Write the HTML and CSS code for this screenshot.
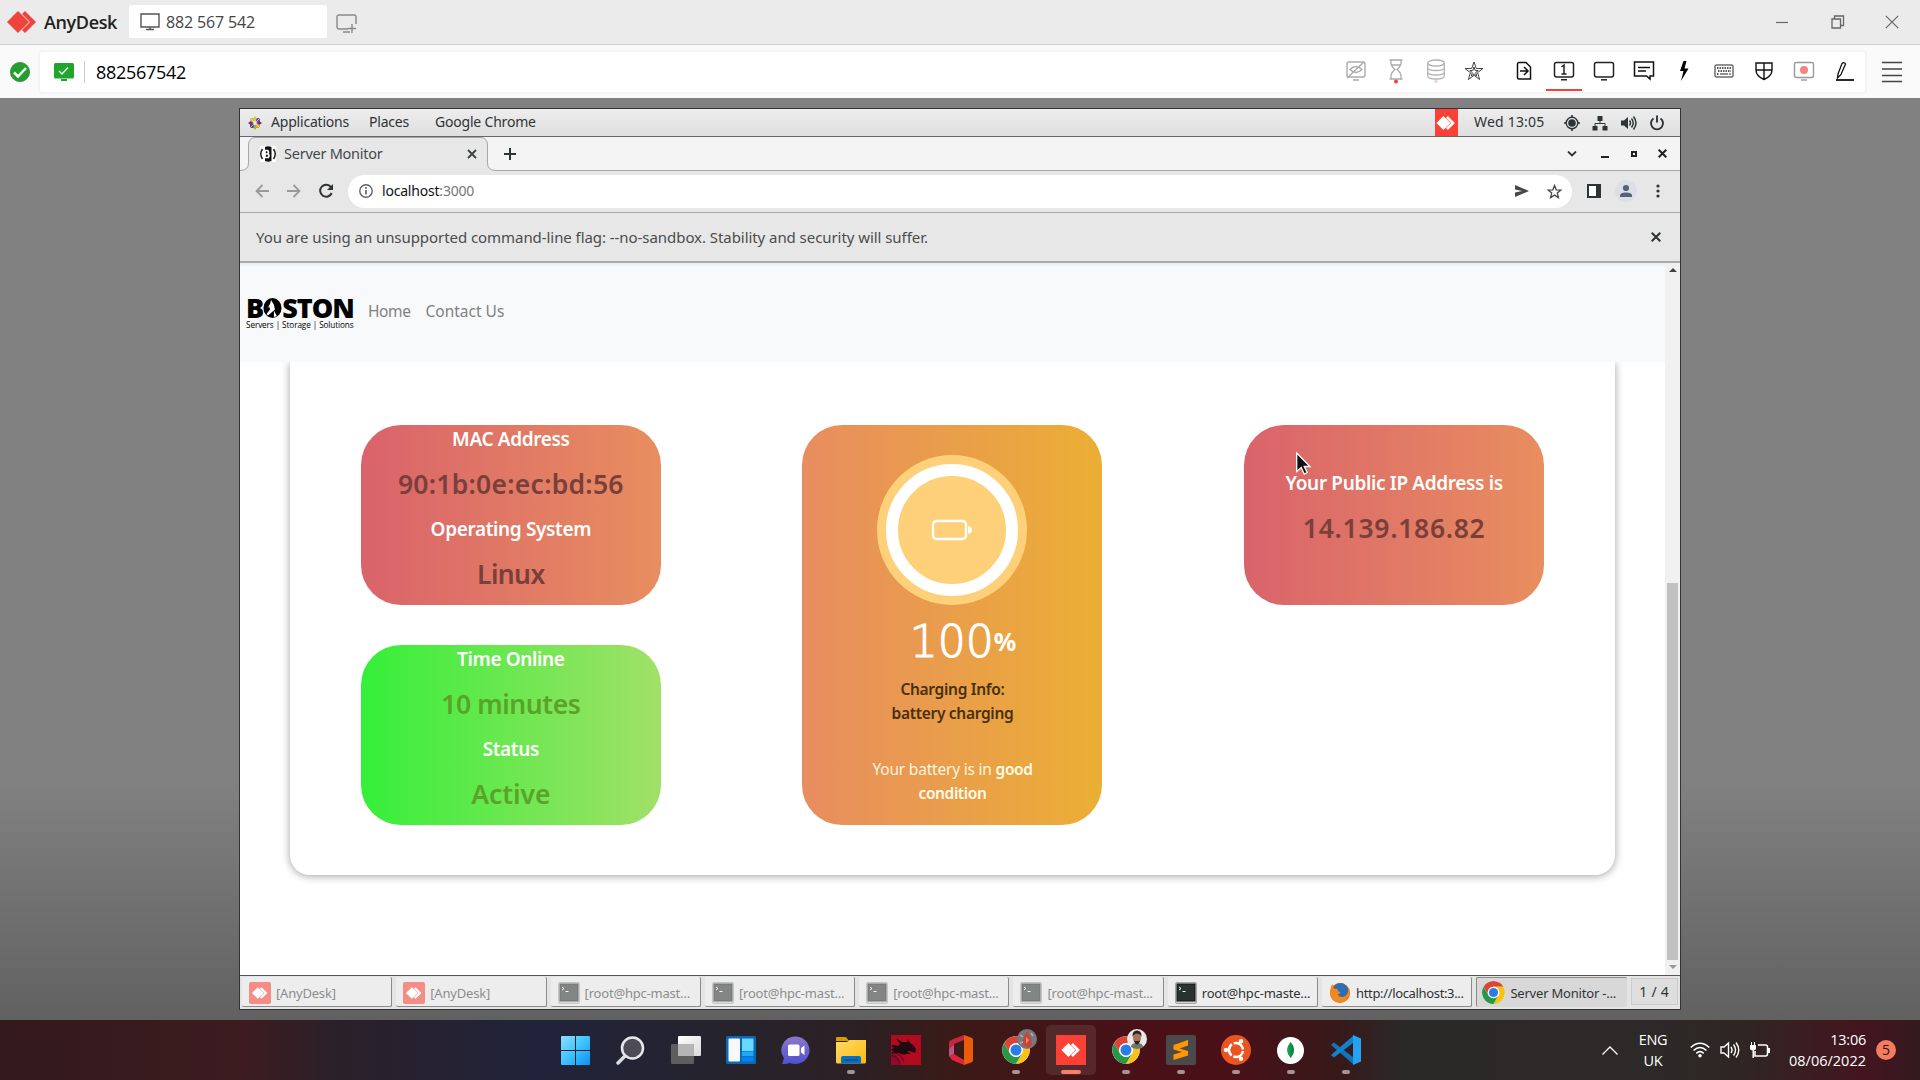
FILE: index.html
```html
<!DOCTYPE html>
<html lang="en">
<head>
<meta charset="utf-8">
<title>AnyDesk - 882567542</title>
<link rel="stylesheet" href="styles.css">
</head>
<body>
<svg class="defs" width="0" height="0">
  <defs>
    <symbol id="chrome" viewBox="0 0 48 48">
      <circle cx="24" cy="24" r="22" fill="#fff"/>
      <path d="M24 13H43.05A22 22 0 0 0 4.95 13L14.47 29.5A11 11 0 0 1 24 13z" fill="#dd4436"/>
      <path d="M24 13H43.05A22 22 0 0 0 4.95 13L14.47 29.5A11 11 0 0 1 24 13z" fill="#fbc116" transform="rotate(120 24 24)"/>
      <path d="M24 13H43.05A22 22 0 0 0 4.95 13L14.47 29.5A11 11 0 0 1 24 13z" fill="#279847" transform="rotate(240 24 24)"/>
      <circle cx="24" cy="24" r="11" fill="#fff"/><circle cx="24" cy="24" r="8.800" fill="#2a7de9"/>
    </symbol>
    <symbol id="anydesk" viewBox="0 0 30 22"><path d="M0 11L11 0l11 11-11 11z"/><path d="M15 3l3-3 11 11-11 11-3-3 8-8z"/></symbol>
    <symbol id="term" viewBox="0 0 22 22"><rect x=".5" y=".5" width="21" height="21" rx="1.500" fill="#d3d4d0" stroke="#a5a6a3"/><rect x="2" y="2" width="18" height="17" fill="#2b312f" stroke="#151716"/><path d="M4 5l2 1.500-2 1.500M7.500 9.500h3" stroke="#fff" stroke-width="1" fill="none"/></symbol>
    <linearGradient id="winblue" x1="0" y1="0" x2="1" y2="1"><stop offset="0" stop-color="#8be0ff"/><stop offset=".5" stop-color="#3fc3fd"/><stop offset="1" stop-color="#0a8ffb"/></linearGradient>
    <linearGradient id="chatg" x1="0" y1="0" x2="0" y2="1"><stop offset="0" stop-color="#8e78c8"/><stop offset="1" stop-color="#4e50d0"/></linearGradient>
    <linearGradient id="foldg" x1="0" y1="0" x2="1" y2="1"><stop offset="0" stop-color="#ffdc63"/><stop offset="1" stop-color="#fdb813"/></linearGradient>
    <linearGradient id="greyg" x1="0" y1="0" x2="1" y2="1"><stop offset="0" stop-color="#fff"/><stop offset="1" stop-color="#d9d9d9"/></linearGradient>
  </defs>
</svg>

<header class="titlebar">
  <svg class="ad-logo" width="30" height="22" fill="#ef443b"><use href="#anydesk"/></svg>
  <span class="ad-name">AnyDesk</span>
  <div class="session-tab">
    <svg width="20" height="18" viewBox="0 0 20 18" fill="none" stroke="#555" stroke-width="1.400"><path d="M1 1h18v13H1zM10 14v3M6 16.500h8"/></svg>
    <span>882 567 542</span>
  </div>
  <svg class="newtab" width="22" height="20" viewBox="0 0 22 20" fill="none" stroke="#888" stroke-width="1.400"><path d="M12 15H3a2 2 0 0 1-2-2V3a2 2 0 0 1 2-2h15a2 2 0 0 1 2 2v7M7 18h7M16 10v9M12 14.500h8"/></svg>
  <div class="wincontrols">
    <svg width="14" height="14" viewBox="0 0 14 14" stroke="#666" stroke-width="1.200" fill="none"><path d="M1 7.500h12"/></svg>
    <svg class="restore" width="14" height="14" viewBox="0 0 14 14" stroke="#666" stroke-width="1.300" fill="none"><path d="M1 4h8.500v9H1zM3.500 4V1h9v9.500h-3"/></svg>
    <svg width="14" height="14" viewBox="0 0 14 14" stroke="#666" stroke-width="1.200" fill="none"><path d="M.8.8l12.400 12.400M13.200.8L.8 13.200"/></svg>
  </div>
</header>

<div class="addressbar">
  <svg class="ok" width="20" height="20" viewBox="0 0 20 20"><circle cx="10" cy="10" r="9.600" fill="#22a02e" stroke="#3c7d45" stroke-width=".8"/><path d="M4 10.500l4 4 8-8.500" fill="none" stroke="#fff" stroke-width="2.500"/></svg>
  <div class="addr">
    <svg class="mon" width="20" height="18" viewBox="0 0 20 18"><rect width="20" height="15.500" rx="1.500" fill="#1fa52b"/><path d="M7 16h6v2H7z" fill="#2f9a3a"/><path d="M5 8l3 3 6-6.500" fill="none" stroke="#fff" stroke-width="1.300"/></svg>
    <i class="sep"></i>
    <span class="addr-text">882567542</span>
    <div class="tools">
      <span class="t"><svg width="22" height="22" viewBox="0 0 22 22" fill="none" stroke="#aaa" stroke-width="1.400"><rect x="2" y="2" width="18" height="15" rx="2"/><path d="M8 20h6M2 18L19 2"/><path d="M5 9.500q6-6 12 0q-6 6-12 0z"/></svg></span>
      <span class="t"><svg width="16" height="26" viewBox="0 0 16 26" fill="none" stroke="#aaa" stroke-width="1.300"><path d="M1.500 2h13M1.500 21h13M3 2v3q0 3 4 6.500Q3 15 3 18v3M13 2v3q0 3-4 6.500 4 3.500 4 6.500v3M4 7h8"/><circle cx="8" cy="23.500" r="2" fill="#f5413a" stroke="none"/></svg></span>
      <span class="t"><svg width="20" height="26" viewBox="0 0 20 26" fill="none" stroke="#b4b4b4" stroke-width="1.300"><ellipse cx="10" cy="5" rx="8.300" ry="3"/><path d="M1.700 5v13c0 4 16.600 4 16.600 0V5M1.700 9.500c0 4 16.600 4 16.600 0M1.700 14c0 4 16.600 4 16.600 0"/><circle cx="10" cy="23.500" r="1.800" fill="#fcd0ce" stroke="none"/></svg></span>
      <span class="t star"><svg width="20" height="20" viewBox="0 0 20 20" fill="none" stroke="#444" stroke-width="1"><path d="M10 1l2.300 6.500H19l-5.400 4.100 2 6.900-5.600-4.200-5.600 4.200 2-6.900L1 7.500h6.700zM10 6l1.200 3.500h3l-2.500 2 1 3.500-2.700-2.200L7.300 15l1-3.500-2.500-2h3z"/></svg></span>
      <span class="t gap"><svg width="16" height="20" viewBox="0 0 16 20" fill="none" stroke="#111" stroke-width="1.500"><path d="M3 1.500h7l4.500 4.500v12H3a1.500 1.500 0 0 1-1.500-1.500V3A1.500 1.500 0 0 1 3 1.500zM4 10h7.500M8 6l4 4-4 4"/></svg></span>
      <span class="t active"><svg width="22" height="20" viewBox="0 0 22 20" fill="none" stroke="#222" stroke-width="1.500"><rect x="1.500" y="1.500" width="19" height="14.500" rx="2"/><path d="M8 18.800h6M8.500 6l2.500-2v9M8.500 13h5"/></svg></span>
      <span class="t"><svg width="22" height="20" viewBox="0 0 22 20" fill="none" stroke="#222" stroke-width="1.500"><rect x="1.500" y="1.500" width="19" height="14.500" rx="2"/><path d="M8 18.800h6"/></svg></span>
      <span class="t"><svg width="22" height="20" viewBox="0 0 22 20" fill="none" stroke="#111" stroke-width="1.500"><path d="M1.500 1h19v14H17v3l-3.500-3h-12zM5 6.500h12M5 10h8"/></svg></span>
      <span class="t"><svg width="12" height="22" viewBox="0 0 12 22" fill="#000"><path d="M5.500 1L2 11H5.500L3 21 10.500 8.500H6.500L8.500 1z"/></svg></span>
      <span class="t"><svg width="20" height="14" viewBox="0 0 20 14" fill="none" stroke="#222"><rect x="1" y="1" width="18" height="12" rx="1"/><path stroke-dasharray="1.500 1" stroke-width="1.500" d="M3 4h14M4 7h13M3 10h2.500"/><path d="M6 10h8M15 10h2"/></svg></span>
      <span class="t"><svg width="18" height="20" viewBox="0 0 18 20" fill="none" stroke="#111" stroke-width="1.400"><path d="M1 2h16v7q0 6-8 9.500Q1 15 1 9zM9 2v16M1 9h16"/></svg></span>
      <span class="t"><svg width="22" height="20" viewBox="0 0 22 20" fill="none" stroke="#999" stroke-width="1.400"><rect x="1.500" y="1.500" width="19" height="15" rx="1.500"/><path d="M8 19h6"/><circle cx="11" cy="9" r="4" fill="#f38680" stroke="none"/></svg></span>
      <span class="t"><svg width="20" height="20" viewBox="0 0 20 20" fill="none" stroke="#111" stroke-width="1.300"><path d="M4 13L8 2.500q2-2 3.500.5L7 13.500 3.500 17z"/><path d="M2 19h18" stroke-width="1.800"/></svg></span>
    </div>
  </div>
  <svg class="burger" width="20" height="22" viewBox="0 0 20 22" stroke="#444" stroke-width="1.300"><path d="M0 1.500h20M0 8h20M0 14.500h20M0 20.500h20"/></svg>
</div>

<main class="stage">
<section class="remote">
  <div class="gnome">
    <svg width="14" height="14" viewBox="0 0 14 14"><path d="M2 2h4v4H2z" fill="#b5c940"/><path d="M8 2h4v4H8z" fill="#8e3f8b"/><path d="M2 8h4v4H2z" fill="#4b4596"/><path d="M8 8h4v4H8z" fill="#efa724"/><path d="M7 0l1.800 2.500L7 6 5.200 2.500z" fill="#d7c94a"/><path d="M7 14l1.800-2.500L7 8l-1.800 3.500z" fill="#9fb13c"/><path d="M0 7l2.500-1.800L6 7 2.500 8.800z" fill="#932279"/><path d="M14 7l-2.500-1.800L8 7l3.500 1.800z" fill="#513c88"/><path d="M2 2l10 10M12 2L2 12" stroke="#eee" stroke-width=".7"/></svg>
    <span class="g1">Applications</span><span class="g2">Places</span><span class="g3">Google Chrome</span>
    <div class="tray">
      <span class="adtray"><svg width="20" height="14" fill="#fff"><use href="#anydesk" width="20" height="14"/></svg></span>
      <span class="clock">Wed 13:05</span>
      <svg width="16" height="16" viewBox="0 0 16 16" fill="none" stroke="#2e3436"><circle cx="8" cy="8" r="5.800" stroke-width="1.400"/><circle cx="8" cy="8" r="3.800" fill="#2e3436" stroke="none"/><path d="M8 0v3M8 13v3M0 8h3M13 8h3" stroke-width="1.600"/></svg>
      <svg width="16" height="16" viewBox="0 0 16 16" fill="#2e3436"><path d="M5.500 1h5v5h-5zM.5 11h5v4.500h-5zM10.500 11h5v4.500h-5z"/><path d="M8 6v2.500M3 11V8.500h10V11" stroke="#2e3436" fill="none"/></svg>
      <svg width="16" height="16" viewBox="0 0 16 16" fill="#2e3436"><path d="M0 5.500h3L7 2v12l-4-3.500H0z"/><path d="M8.500 5.500q2 2.500 0 5M10.500 3.500q3.500 4.500 0 9M12.500 1.500q5 6.500 0 13" fill="none" stroke="#2e3436" stroke-width="1.500"/></svg>
      <svg width="16" height="16" viewBox="0 0 16 16" fill="none" stroke="#2e3436" stroke-width="1.900"><path d="M4.500 3.500a6 6 0 1 0 7 0M8 .5v7"/></svg>
    </div>
  </div>

  <div class="tabstrip">
    <svg class="tabshape" width="1440" height="34" viewBox="0 0 1440 34"><path d="M0 33.500Q8.500 33.500 8.500 26V8Q8.500.5 16 .5H240Q247.500.5 247.500 8V26Q247.500 33.500 256 33.500H1440V35H0z" fill="#e7e7e7" stroke="#a6a6a6"/></svg>
    <div class="tab">
      <svg width="16" height="16" viewBox="0 0 16 16"><path d="M0 0h16v16H0z" fill="#fff"/><path d="M5 1Q8-.5 11.500 1v14Q8 16.500 5 15z" fill="#111"/><path d="M2.500 3Q-1 8 2.500 13M13.500 3Q17 8 13.500 13" stroke="#222" stroke-width="1.500" fill="none"/><path d="M5 4.500v7M5 4.500h2.500q2 1.700 0 3.500H5h3q2 1.700 0 3.500H5" stroke="#fff" stroke-width="1.700" fill="none"/></svg>
      <span>Server Monitor</span>
      <svg class="tabx" width="10" height="10" viewBox="0 0 10 10" stroke="#3a3f41" stroke-width="1.800"><path d="M1 1l8 8M9 1L1 9"/></svg>
    </div>
    <svg class="plus" width="12" height="12" viewBox="0 0 12 12" stroke="#2e3436" stroke-width="2"><path d="M6 0v12M0 6h12"/></svg>
    <div class="cwin">
      <svg width="10" height="6" viewBox="0 0 10 6" fill="none" stroke="#2e3436" stroke-width="1.800"><path d="M1 .5l4 4 4-4"/></svg>
      <svg class="cmin" width="8" height="8" viewBox="0 0 8 8" fill="none" stroke="#222" stroke-width="2"><path d="M0 7h8"/></svg>
      <svg width="6" height="6" viewBox="0 0 6 6" fill="none" stroke="#222" stroke-width="2"><path d="M1 1h4v4H1z"/></svg>
      <svg width="9" height="9" viewBox="0 0 9 9" stroke="#222" stroke-width="2"><path d="M.7.7l7.600 7.600M8.300.7L.7 8.300"/></svg>
    </div>
  </div>

  <div class="ctoolbar">
    <svg width="14" height="14" viewBox="0 0 14 14" fill="none" stroke="#9a9a9a" stroke-width="1.800"><path d="M14 7H1.500M7.500 1l-6 6 6 6"/></svg>
    <svg width="14" height="14" viewBox="0 0 14 14" fill="none" stroke="#9a9a9a" stroke-width="1.800"><path d="M0 7h12.500M6.500 1l6 6-6 6"/></svg>
    <svg width="16" height="16" viewBox="0 0 16 16" fill="none" stroke="#2e3436" stroke-width="2"><path d="M13 4.200A6 6 0 1 0 13.700 10"/><path d="M15 1v6H9z" fill="#2e3436" stroke="none"/></svg>
    <div class="omni">
      <svg width="14" height="14" viewBox="0 0 14 14" fill="none" stroke="#5f6368" stroke-width="1.400"><circle cx="7" cy="7" r="6.200"/><path d="M7 6v4.500M7 3v1.700" stroke-width="1.700"/></svg>
      <span class="url"><b>localhost</b>:3000</span>
      <svg class="send" width="14" height="12" viewBox="0 0 14 12" fill="#484848"><path d="M0 0l14 6-14 6V7.500L7 6 0 4.500z"/></svg>
      <svg width="15" height="15" viewBox="0 0 15 15" fill="none" stroke="#484848" stroke-width="1.300"><path d="M7.500 1.500l1.700 4.300 4.600.3-3.500 3 1.100 4.500-3.900-2.500-3.900 2.500 1.100-4.500-3.500-3 4.600-.3z"/></svg>
    </div>
    <svg class="panel" width="14" height="14" viewBox="0 0 14 14"><path d="M0 0h14v14H0z" fill="#2e3436"/><path d="M2 2h7v10H2z" fill="#fff"/></svg>
    <svg class="ava" width="22" height="22" viewBox="0 0 22 22"><circle cx="11" cy="11" r="11" fill="#dcdfe6"/><g fill="#56627a"><circle cx="11" cy="8" r="3.100"/><path d="M5 17v-1.500q0-3 6-3t6 3V17z"/></g></svg>
    <svg class="dots" width="4" height="14" viewBox="0 0 4 14" fill="#2e3436"><circle cx="2" cy="2" r="1.600"/><circle cx="2" cy="7" r="1.600"/><circle cx="2" cy="12" r="1.600"/></svg>
  </div>

  <div class="infobar"><span>You are using an unsupported command-line flag: --no-sandbox. Stability and security will suffer.</span>
    <svg width="10" height="10" viewBox="0 0 10 10" stroke="#2e3436" stroke-width="2"><path d="M.7.7l8.600 8.600M9.300.7L.7 9.300"/></svg>
  </div>

  <div class="viewport">
    <div class="page">
      <nav class="navbar">
        <div class="brand">
          <div class="brand-name"><span>B</span><svg width="19" height="20" viewBox="0 0 19 21"><ellipse cx="9.500" cy="10.500" rx="9.500" ry="10.500"/><path d="M8 2l3 5 1 5-2 2-5 4-2-1 4-5-1-3-2 2 3-5z" fill="#fff"/><path d="M11 13l3 6-3 1z" fill="#fff"/></svg><span>STON</span></div>
          <div class="brand-sub">Servers | Storage | Solutions</div>
        </div>
        <a class="home">Home</a><a>Contact Us</a>
      </nav>
      <div class="content">
        <div class="sheet">
          <div class="col">
            <div class="card red">
              <h5>MAC Address</h5><h3 class="mac">90:1b:0e:ec:bd:56</h3>
              <h5>Operating System</h5><h3 class="os">Linux</h3>
            </div>
            <div class="card green">
              <h5>Time Online</h5><h3 class="uptime">10 minutes</h3>
              <h5>Status</h5><h3>Active</h3>
            </div>
          </div>
          <div class="col">
            <div class="card battery">
              <svg width="150" height="150" viewBox="0 0 150 150"><circle cx="75" cy="75" r="75" fill="#ffd07a"/><circle cx="75" cy="75" r="60" fill="none" stroke="#fff" stroke-width="12"/><rect x="56" y="66" width="33" height="18" rx="3.500" fill="none" stroke="#fff" stroke-width="2.300"/><path d="M91 71q4 1 4 4t-4 4z" fill="#fff"/></svg>
              <div class="pct"><span class="num">100</span><span class="sign">%</span></div>
              <p class="charge">Charging Info:<br>battery charging</p>
              <p class="cond">Your battery is in <b>good</b><br><b>condition</b></p>
            </div>
          </div>
          <div class="col">
            <div class="card red ip">
              <h5>Your Public IP Address is</h5><h3>14.139.186.82</h3>
            </div>
          </div>
        </div>
      </div>
    </div>
    <div class="scroll">
      <svg width="8" height="4" viewBox="0 0 8 4" fill="#444"><path d="M4 0l4 4H0z"/></svg>
      <i></i>
      <svg width="8" height="4" viewBox="0 0 8 4" fill="#999"><path d="M0 0h8L4 4z"/></svg>
    </div>
  </div>

  <div class="tasks">
    <div class="task min"><span class="adi"><svg width="16" height="12" fill="#fff"><use href="#anydesk" width="16" height="12"/></svg></span><span>[AnyDesk]</span></div>
    <div class="task min"><span class="adi"><svg width="16" height="12" fill="#fff"><use href="#anydesk" width="16" height="12"/></svg></span><span>[AnyDesk]</span></div>
    <div class="task min"><svg width="22" height="22"><use href="#term"/></svg><span>[root@hpc-mast...</span></div>
    <div class="task min"><svg width="22" height="22"><use href="#term"/></svg><span>[root@hpc-mast...</span></div>
    <div class="task min"><svg width="22" height="22"><use href="#term"/></svg><span>[root@hpc-mast...</span></div>
    <div class="task min"><svg width="22" height="22"><use href="#term"/></svg><span>[root@hpc-mast...</span></div>
    <div class="task"><svg width="22" height="22"><use href="#term"/></svg><span>root@hpc-maste...</span></div>
    <div class="task web"><svg width="22" height="22" viewBox="0 0 22 22"><circle cx="11" cy="11" r="10" fill="#e66000"/><circle cx="11.500" cy="8.500" r="7.500" fill="#2a6fb5"/><path d="M2 5q-3 9 3 14 8 4 13-2 4-6 2-11-1 9-7 9-4 0-4-3l3-1-3-2q0-3-3-2-3-2-2-5-2 1-2 3z" fill="#f08a1c"/></svg><span>http://localhost:3...</span></div>
    <div class="task on"><svg width="25" height="25"><use href="#chrome"/></svg><span>Server Monitor -...</span></div>
    <div class="pager">1 / 4</div>
  </div>
</section>
</main>

<footer class="wtaskbar">
  <div class="apps">
    <span class="app"><svg width="29" height="29" viewBox="0 0 29 29" fill="url(#winblue)"><path d="M0 1q0-1 1-1h27q1 0 1 1v27q0 1-1 1H1q-1 0-1-1z"/><path d="M14 0h1v29h-1zM0 14h29v1H0z" fill="#20202c"/></svg></span>
    <span class="app"><svg width="29" height="29" viewBox="0 0 29 29"><path d="M10 19l-8 8" stroke="#dadde0" stroke-width="3.500" stroke-linecap="round"/><circle cx="16.500" cy="12" r="10.500" fill="#4c4b57" stroke="#e6e8ea" stroke-width="2.500"/></svg></span>
    <span class="app"><svg width="30" height="28" viewBox="0 0 30 28"><rect y="8" width="23" height="20" rx="1" fill="#5e5e5e"/><rect x="7" width="23" height="20" rx="1" fill="url(#greyg)"/><path d="M7 8h16v12H7z" fill="#b5b5b5"/></svg></span>
    <span class="app"><svg width="30" height="28" viewBox="0 0 30 28"><rect width="30" height="28" rx="1.500" fill="#0b68b8"/><rect x="2.500" y="2.500" width="11.500" height="23" rx="1" fill="#f8f8f8"/><path d="M16 2.500h11.500V15H16z" fill="#69d7ff"/><path d="M16 15.500h11.500V20H16z" fill="#1fa7fb"/><path d="M16 20.500h11.500v5H16z" fill="#0784ea"/></svg></span>
    <span class="app"><svg width="30" height="29" viewBox="0 0 30 29"><path d="M15 .5a14 13.800 0 1 1-6 26.500q-4 1.500-8 .8l2-5.500A14 13.800 0 0 1 15 .5z" fill="url(#chatg)"/><rect x="7" y="8.500" width="11.500" height="11.500" rx="1.500" fill="#fff"/><path d="M20 12l3.500-2.500v9.500L20 16.500z" fill="#fff"/></svg></span>
    <span class="app run"><svg width="30" height="27" viewBox="0 0 30 27"><path d="M0 1q0-1 1-1h9l3 4H0z" fill="#d99b00"/><path d="M0 5h11l2.500-2H30v22q0 1.500-1.500 1.500h-27Q0 26.500 0 25z" fill="url(#foldg)"/><path d="M5 26.500V21q0-2 2-2h16q2 0 2 2v5.500z" fill="#0a6fc0"/><path d="M8 23h14" stroke="#034a8c" stroke-width="1.200"/></svg></span>
    <span class="app"><svg width="30" height="30" viewBox="0 0 30 30"><path d="M0 0h30v30H0z" fill="#b30a20"/><path d="M0 30V17q6-2 10 13z" fill="#96082f"/><path d="M0 11q3-2 7 0l2-2-4-6 6 4 5 0 1-3 2 4q5 2 6 7l-1 3-5-2-3 0 4 3-5 0q-3 2-7-1-5 1-8 0l3-2-4-1 4-2z" fill="#200a10"/><path d="M0 21q6-1 9 8M2 18q8 0 11 9" stroke="#5d0a24" fill="none" stroke-width="1.200"/></svg></span>
    <span class="app"><svg width="26" height="30" viewBox="0 0 26 30"><path d="M16 0L3 5q-2 1-2 3v13l5-2V9l10-4z" fill="#c5283e"/><path d="M6 19l-5 2 3 4 12 5v-5z" fill="#e0243a"/><path d="M16 0l7 2.500q2 .5 2 2v21q0 1.500-2 2L16 30z" fill="#ec5a0c"/><path d="M1 14v7l5-2v-9z" fill="#b8568c"/></svg></span>
    <span class="app run"><svg width="30" height="30"><use href="#chrome"/></svg><svg class="who" width="20" height="20" viewBox="0 0 20 20"><circle cx="10" cy="10" r="10" fill="#77797f"/><path d="M8 4l3-1 3 6 1 7-4 3-6-4z" fill="#c4463a"/><path d="M9 8l3 3-3 4z" fill="#e88c5a"/><path d="M3 6l3 2M14 4l2 3M3 14l3-1" stroke="#aab0b6" stroke-width="1.500"/></svg></span>
    <span class="app run active"><i class="adbig"><svg width="20" height="14" fill="#fff"><use href="#anydesk" width="20" height="14"/></svg></i></span>
    <span class="app run"><svg width="30" height="30"><use href="#chrome"/></svg><svg class="who" width="20" height="20" viewBox="0 0 20 20"><circle cx="10" cy="10" r="10" fill="#e8e8ea"/><path d="M4 18q0-4 6-4t6 4q-6 4-12 0z" fill="#6b7a68"/><ellipse cx="10" cy="9" rx="4" ry="5.500" fill="#a8755c"/><path d="M5.500 8Q5 1.500 10 1.500T14.500 8Q13 4.500 10 4.500T5.500 8zM7 11.500q3 1 6 0-1 4-3 4t-3-4z" fill="#2c2220"/></svg></span>
    <span class="app run"><svg width="30" height="30" viewBox="0 0 30 30"><rect width="30" height="30" rx="2" fill="#4a4a4a"/><path d="M7.500 10L22 5v5.500L13.500 13.500 22 16v4.500L7.500 25v-5.500L16 17l-8.500-2.500z" fill="#ff9800"/></svg></span>
    <span class="app run"><svg width="30" height="30" viewBox="0 0 30 30"><circle cx="15" cy="15" r="15" fill="#e95420"/><circle cx="15" cy="15" r="7" fill="none" stroke="#fff" stroke-width="2.500" stroke-dasharray="12.700 2" stroke-dashoffset="-1"/><g fill="#fff"><circle cx="5" cy="15" r="2.200"/><circle cx="20" cy="6.300" r="2.200"/><circle cx="20" cy="23.700" r="2.200"/></g></svg></span>
    <span class="app run"><svg width="27" height="27" viewBox="0 0 27 27"><circle cx="13.500" cy="13.500" r="13.500" fill="#fff"/><path d="M13.500 5q7 8 0 16-7-8 0-16z" fill="#13a150"/><path d="M13.500 5q7 8 0 16z" fill="#0c8a43"/></svg></span>
    <span class="app run"><svg width="30" height="30" viewBox="0 0 30 30"><path d="M0 10l3-2.500L22 22v7z" fill="#1173be"/><path d="M0 20l3 2.500L22 8V1z" fill="#1481cf"/><path d="M22 0l8 3.500v23L22 30z" fill="#27a2f0"/></svg></span>
  </div>
  <div class="systray">
    <svg class="up" width="16" height="9" viewBox="0 0 16 9" fill="none" stroke="#fff" stroke-width="1.300"><path d="M.5 8.500L8 1l7.500 7.500"/></svg>
    <div class="lang"><span>ENG</span><span>UK</span></div>
    <svg width="20" height="16" viewBox="0 0 20 16" fill="none" stroke="#fff" stroke-width="1.600"><path d="M.7 5.500q9.300-8.500 18.600 0M3.500 8.500q6.500-6 13 0M6.300 11.300q3.700-3.300 7.400 0"/><circle cx="10" cy="13.700" r="1.800" fill="#fff" stroke="none"/></svg>
    <svg width="20" height="18" viewBox="0 0 20 18" fill="none" stroke="#fff" stroke-width="1.400"><path d="M1 6h3l4.500-4v14L4 12H1zM11 6q2 3 0 6M13.500 3.500q4 5.500 0 11M16 1.500q5.500 7.500 0 15"/></svg>
    <svg width="20" height="16" viewBox="0 0 20 16" fill="none" stroke="#fff" stroke-width="1.500"><path d="M8 3h7.500q2 0 2 2v7q0 2-2 2H5V9"/><path d="M0 3h6v3q0 2.500-3 2.500T0 6zM1 0h1v3H1zM4 0h1v3H4zM2.500 8h1.500v8H2.500zM18 6h2v5h-2z" fill="#fff" stroke="none"/></svg>
    <div class="dt"><span class="time">13:06</span><span class="date">08/06/2022</span></div>
    <div class="badge">5</div>
  </div>
</footer>

<svg class="cursor" width="16" height="24" viewBox="0 0 16 24"><path d="M.7 1v18.500l4.500-4 3 6.500 3-1.500-3-6H14z" fill="#111" stroke="#fff" stroke-width="1.300"/></svg>
</body>
</html>
```
FILE: styles.css
```css
* { box-sizing: border-box; }
body { margin: 0; width: 1920px; height: 1080px; overflow: hidden; display: flex; flex-direction: column; position: relative; font-family: "Noto Sans", "Open Sans", sans-serif; font-size: 15px; color: #2e3436; white-space: nowrap; }
svg { display: block; flex: none; }
h3, h5, p { margin: 0; }
.defs { position: absolute; }

.titlebar { height: 45px; flex: none; background: #ebebeb; border-bottom: 1px solid #d0d0d0; display: flex; align-items: center; padding: 0 21px 0 7px; }
.ad-logo { margin-top: -1px; }
.ad-name { margin-left: 7px; width: 78px; font: 600 18px "Open Sans", sans-serif; letter-spacing: -.37px; color: #222; }
.session-tab { margin: -1px 0 0 7px; width: 198px; height: 33px; background: #fff; border-radius: 2px; display: flex; align-items: center; padding-left: 11px; gap: 6px; font: 16px "Open Sans", sans-serif; letter-spacing: -.15px; color: #444; }
.newtab { margin: 3px 0 0 9px; }
.wincontrols { margin-left: auto; display: flex; gap: 40px; }
.restore { margin-left: 2px; }

.addressbar { height: 53px; flex: none; background: #fafafa; display: flex; align-items: center; padding-left: 10px; }
.addr { margin-left: 10px; width: 1825px; height: 40px; background: #fff; border-radius: 3px; box-shadow: 0 0 0 2px #f4f4f4; display: flex; align-items: center; padding-left: 14px; }
.sep { width: 1px; height: 22px; background: #ccc; margin: 0 11px 0 10px; }
.addr-text { font: 18px "Open Sans", sans-serif; letter-spacing: -.29px; color: #000; margin-top: 1px; }
.tools { margin: 0 1px 0 auto; display: flex; align-items: center; height: 40px; }
.t { width: 40px; height: 40px; display: flex; align-items: center; justify-content: center; padding-bottom: 1px; }
.t.star { width: 36px; }
.t.gap { margin-left: 12px; }
.t.active { background: linear-gradient(#f5413a, #f5413a) center bottom 1px / 36px 2px no-repeat; }
.burger { margin-left: 17px; }

.stage { height: 922px; flex: none; padding: 10px 0 0 239px; background: linear-gradient(#818181 0, #818181 680px, #616161 922px); }
.remote { width: 1442px; height: 902px; border: 1px solid #333; display: flex; flex-direction: column; background: #fff; }
.gnome { height: 28px; flex: none; background: linear-gradient(#ededed, #dfdfdf); border-bottom: 1px solid #666; display: flex; align-items: center; padding-left: 8px; font-size: 14px; letter-spacing: -.2px; }
.gnome > span, .clock { margin-top: -2px; }
.g1 { margin-left: 9px; width: 98px; }
.g2 { width: 66px; }
.tray { margin-left: auto; display: flex; align-items: center; gap: 12.500px; padding-right: 15px; }
.adtray { width: 23px; height: 27px; background: #fb4136; display: flex; align-items: center; justify-content: center; }
.clock { width: 76px; margin-left: 4px; margin-right: 1px; letter-spacing: .2px; }

.tabstrip { height: 34px; flex: none; background: #f4f4f4; position: relative; display: flex; align-items: center; padding-right: 13px; }
.tabshape { position: absolute; left: 0; top: 0; }
.tab { position: relative; margin-left: 20px; width: 226px; display: flex; align-items: center; gap: 8px; font-size: 14.500px; letter-spacing: -.25px; color: #44484a; }
.tab span { margin-top: -2px; }
.tabx { margin-left: auto; margin-right: 9px; }
.plus { position: relative; margin-left: 18px; }
.cwin { position: relative; margin: -1px 0 0 auto; display: flex; align-items: center; gap: 21.500px; }
.cmin { margin-left: 3px; }

.ctoolbar { height: 42px; flex: none; background: #e7e7e7; border-bottom: 1px solid #a6a6a6; display: flex; align-items: center; padding: 0 0 1px 15px; }
.ctoolbar > svg:nth-child(2) { margin-left: 18px; }
.ctoolbar > svg:nth-child(3) { margin-left: 17px; }
.omni { margin-left: 14px; width: 1224px; height: 33px; background: #fff; border-radius: 17px; display: flex; align-items: center; padding: 0 10px 0 11px; gap: 8px; font-size: 14px; letter-spacing: -.2px; }
.url { color: #777; margin-top: -1px; padding-left: 1px; }
.url b { font-weight: 400; color: #111; }
.send { margin-left: auto; margin-right: 10px; }
.panel { margin-left: 15px; }
.ava { margin-left: 14px; }
.dots { margin-left: 19px; }

.infobar { height: 50px; flex: none; background: #e7e7e7; border-bottom: 2px solid #a9a9a9; display: flex; align-items: center; justify-content: space-between; padding: 0 19px 0 16px; font-size: 15px; letter-spacing: -.06px; color: #4a4d4f; }

.viewport { height: 712px; flex: none; display: flex; }
.page { width: 1425px; display: flex; flex-direction: column; }
.navbar { height: 99px; flex: none; background: linear-gradient(#e9eaec, #f8f9fb 4px); display: flex; align-items: center; padding-left: 6px; font-size: 15.500px; color: #808183; }
.navbar a { margin: -3px 15px 0 0; }
.navbar .home { letter-spacing: -.4px; }
.brand { width: 108px; margin-right: 14px; margin-top: 3px; color: #000; }
.brand-name { display: flex; align-items: center; height: 20px; font: 800 27px/20px "Open Sans", sans-serif; letter-spacing: -1px; }
.brand-sub { margin-top: 1px; font: 8.200px/12px "Open Sans", sans-serif; letter-spacing: -.1px; }
.content { height: 613px; overflow: hidden; padding-left: 50px; background: #fff; }
.sheet { width: 1325px; height: 513px; border-radius: 0 0 20px 20px; box-shadow: 0 1px 8px rgba(0, 0, 0, .38); padding-top: 63px; display: grid; grid-template-columns: repeat(3, 1fr); }
.col { display: flex; flex-direction: column; align-items: center; gap: 40px; }
.card { width: 300px; height: 180px; border-radius: 40px; text-align: center; }
.card h5 { font-size: 19px; line-height: 29px; letter-spacing: -.36px; font-weight: 600; color: #fff; }
.card h3 { font-size: 26.500px; line-height: 61px; font-weight: 600; }
.card .mac { letter-spacing: .25px; }
.card .os { letter-spacing: -.6px; }
.card .uptime { letter-spacing: -.4px; }
.ip h3 { letter-spacing: .7px; }
.red { background: linear-gradient(90deg, #d9636b, #e88e5f); }
.red h3 { color: #7a3f3b; }
.green { background: linear-gradient(90deg, #35ef39, #a2e068); }
.green h3 { color: #5ba328; }
.ip { padding-top: 44px; }
.battery { height: 400px; background: linear-gradient(90deg, #e88d60, #ebaf34); display: flex; flex-direction: column; align-items: center; padding-top: 30px; }
.pct { display: flex; align-items: center; height: 72px; color: #fff; margin-left: 21px; }
.num { font: 200 44px "DejaVu Sans Light", "DejaVu Sans", sans-serif; -webkit-text-stroke: 1.200px #fff; }
.sign { font: 700 25px "Noto Sans", sans-serif; margin-top: -1px; }
.charge { font-weight: 600; font-size: 15.500px; line-height: 24px; letter-spacing: -.3px; color: #47300c; }
.cond { margin-top: 32px; font-size: 15.500px; line-height: 24px; letter-spacing: -.2px; color: #fff4dc; }
.cond b { font-weight: 600; letter-spacing: -.4px; color: #fffbe8; }

.scroll { width: 15px; background: #f1f1f1; display: flex; flex-direction: column; align-items: center; padding: 5px 0 6px; }
.scroll i { margin: 311px 0 5px; width: 11px; flex: 1; background: #c1c1c1; }

.tasks { flex: 1; border-top: 1px solid #555; background: #e4e4e4; display: flex; padding: 1px 2px 2px; gap: 4px; font-size: 13px; letter-spacing: -.2px; }
.task { width: 150.300px; display: flex; align-items: center; gap: 5px; padding: 2px 0 0 7px; background: #ededed; border: solid #8a8a8a; border-width: 0 1.500px 1.500px 0; border-radius: 2px; }
.task.min { color: #8b8e8f; }
.task.min > svg { opacity: .55; }
.task.web { letter-spacing: -.35px; }
.adi { width: 22px; height: 22px; border-radius: 2px; background: #f58d87; display: flex; align-items: center; justify-content: center; }
.task.on { background: #d8d8d8; border-width: 1px 0 0 1px; padding: 0 0 0 4px; gap: 4px; }
.pager { width: 47px; margin: 1px 0 2px; border: 1px solid #ccc; background: #dedede; display: flex; align-items: center; justify-content: center; font-size: 14px; letter-spacing: .3px; }

.wtaskbar { height: 60px; flex: none; display: flex; align-items: center; padding-left: 548px; background: linear-gradient(90deg, #32191b 0, #3d1c20 240px, #2a2029 340px, #20233a 540px, #26232b 740px, #2c2024 860px, #3b1a16 960px, #4a1018 1140px, #4a1018 1220px, #37191a 1340px, #2b2828 1400px, #2c2928 1640px, #2f2624 1740px, #43151f 1860px, #35191f 1920px); }
.apps { display: flex; height: 60px; align-items: center; }
.app { width: 55px; height: 50px; display: flex; align-items: center; justify-content: center; position: relative; }
.app.run::after { content: ""; position: absolute; left: 24px; bottom: 1px; width: 8px; height: 4px; border-radius: 2px; background: #a39394; }
.app.active { background: rgba(255, 255, 255, .09); border-radius: 5px; width: 50px; margin: 0 2.500px; }
.app.run.active::after { left: 15px; width: 20px; background: #f4806a; }
.adbig { width: 30px; height: 30px; background: #fb4136; display: flex; align-items: center; justify-content: center; }
.who { position: absolute; right: 6px; top: 4px; }
.systray { margin-left: auto; margin-right: 24px; display: flex; align-items: center; color: #fff; font: 14.500px/21px "Open Sans", sans-serif; }
.up { margin-right: 21px; }
.lang { display: flex; flex-direction: column; align-items: center; width: 28px; margin-right: 23px; letter-spacing: -.3px; }
.systray > svg:not(.up) { margin-right: 10px; }
.dt { display: flex; flex-direction: column; align-items: flex-end; width: 86px; }
.time { letter-spacing: -.25px; }
.badge { margin-left: 10px; width: 20px; height: 20px; border-radius: 50%; background: #f47b60; color: #2a1512; text-align: center; font-size: 14px; line-height: 20px; }
.cursor { position: absolute; left: 1296px; top: 452px; }
```
